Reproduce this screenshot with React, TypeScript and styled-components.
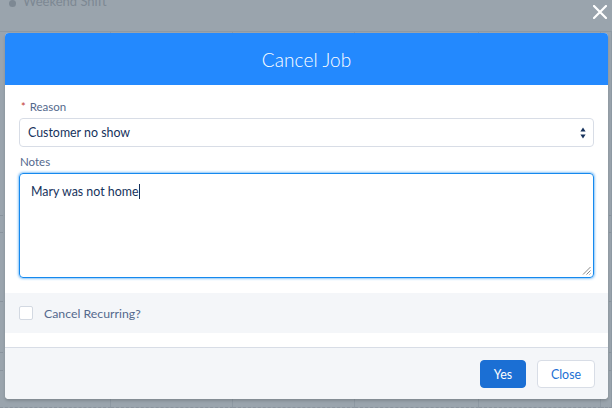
import styled, { createGlobalStyle } from 'styled-components';

const GlobalStyle = createGlobalStyle`
  html, body {
    margin: 0;
    padding: 0;
  }
  body {
    font-family: Lato, "Noto Sans", "Liberation Sans", sans-serif;
    background: #9aa4ad;
    -webkit-font-smoothing: antialiased;
  }
  * {
    box-sizing: border-box;
  }
`;

// background calendar, dimmed by the overlay
const colWidths = [111, 122, 122, 124, 122, 11];
const rowHeights = [184, 17, 69, 51, 18, 37];

const Page = styled.div`
  position: relative;
  width: 612px;
  height: 408px;
  overflow: hidden;
  background: #9aa4ad;
`;

const Calendar = styled.div`
  display: flex;
  flex-direction: column;
  height: 100%;
`;

const ShiftRow = styled.div`
  height: 32px;
  display: flex;
  align-items: flex-start;
  gap: 7px;
  padding-left: 9px;
  border-bottom: 1px solid #8e99a3;
  color: #7d8893;
  font-size: 13px;
`;

const ShiftDot = styled.span`
  width: 7px;
  height: 7px;
  border-radius: 50%;
  background: #7d8893;
`;

const ShiftLabel = styled.span`
  line-height: 13px;
  margin-top: -5px;
`;

const Grid = styled.div`
  flex: 1;
  display: grid;
  grid-template-columns: ${colWidths.map((w) => `${w}px`).join(' ')};
  grid-template-rows: ${rowHeights.map((h) => `${h}px`).join(' ')};
`;

const Cell = styled.div`
  border-right: 1px solid #8e99a3;
  border-bottom: 1px dashed #8a949e;
`;

const Overlay = styled.div`
  position: absolute;
  inset: 0;
  display: flex;
  align-items: flex-start;
  padding: 33px 4px 0 5px;
`;

const CloseIcon = styled.button`
  position: absolute;
  top: 5px;
  right: 5px;
  width: 14px;
  height: 14px;
  padding: 0;
  border: none;
  background: none;
  display: flex;
`;

const Modal = styled.div`
  flex: 1;
  display: flex;
  flex-direction: column;
  background: #fff;
  border-radius: 4px;
  overflow: hidden;
  box-shadow: 0 2px 3px rgba(0, 0, 0, 0.16);
`;

const Header = styled.div`
  height: 52px;
  display: flex;
  align-items: center;
  justify-content: center;
  background: #2389fe;
`;

const Title = styled.h2`
  margin: 0;
  color: #fff;
  font-size: 19px;
  font-weight: 300;
  letter-spacing: 0.1px;
`;

const Body = styled.div`
  display: flex;
  flex-direction: column;
  padding: 14px 14px 0;
`;

const Label = styled.label`
  display: flex;
  gap: 4px;
  height: 16px;
  line-height: 16px;
  margin-bottom: 3px;
  padding-left: 1px;
  font-size: 11.5px;
  color: #54698d;
`;

const Required = styled.abbr`
  color: #c23934;
  text-decoration: none;
  font-size: 11px;
  margin-left: 1px;
`;

const SelectBox = styled.div`
  height: 29px;
  display: flex;
  align-items: center;
  justify-content: space-between;
  padding: 0 7px 0 8px;
  border: 1px solid #d8dde6;
  border-radius: 4px;
  color: #16325c;
  font-size: 12.4px;
  margin-bottom: 7px;
`;

const NotesBox = styled.div`
  position: relative;
  height: 105px;
  padding: 9px 11px;
  border: 1px solid #1589ee;
  border-radius: 4px;
  box-shadow: 0 0 3px #1589ee;
  color: #16325c;
  font-size: 12.4px;
  line-height: 17px;
`;

const Caret = styled.span`
  display: inline-block;
  width: 1px;
  height: 15px;
  margin-left: 1px;
  vertical-align: -3px;
  background: #16325c;
`;

const Grip = styled.svg`
  position: absolute;
  right: 2px;
  bottom: 2px;
`;

const CheckSection = styled.div`
  margin-top: 15px;
  height: 40px;
  display: flex;
  align-items: center;
  gap: 11px;
  padding: 0 14px;
  background: #f4f6f9;
  color: #54698d;
  font-size: 12.3px;
`;

const Checkbox = styled.span`
  width: 14px;
  height: 14px;
  border: 1px solid #d3d9e2;
  border-radius: 2px;
  background: #fff;
`;

const Spacer = styled.div`
  height: 14px;
`;

const Footer = styled.div`
  display: flex;
  justify-content: flex-end;
  gap: 11px;
  padding: 12px 13px 11px;
  border-top: 1px solid #d8dde6;
  background: #f4f6f9;
`;

const Button = styled.button<{ $primary?: boolean }>`
  height: 28px;
  width: ${(p) => (p.$primary ? 46 : 58)}px;
  padding: 0;
  border-radius: 4px;
  border: 1px solid ${(p) => (p.$primary ? '#1b6fd4' : '#d8dde6')};
  background: ${(p) => (p.$primary ? '#1b6fd4' : '#fff')};
  color: ${(p) => (p.$primary ? '#fff' : '#1b6fd4')};
  font-family: inherit;
  font-size: 12.4px;
`;

export default function App() {
  return (
    <>
      <GlobalStyle />
      <Page>
        <Calendar>
          <ShiftRow>
            <ShiftDot />
            <ShiftLabel>Weekend Shift</ShiftLabel>
          </ShiftRow>
          <Grid>
            {rowHeights.map((_, r) =>
              colWidths.map((_, c) => <Cell key={`${r}-${c}`} />)
            )}
          </Grid>
        </Calendar>

        <Overlay>
          <CloseIcon aria-label="Close">
            <svg width="14" height="14" viewBox="0 0 14 14">
              <path d="M1 1 L13 13 M13 1 L1 13" stroke="#fff" strokeWidth="2.2" strokeLinecap="round" />
            </svg>
          </CloseIcon>

          <Modal>
            <Header>
              <Title>Cancel Job</Title>
            </Header>

            <Body>
              <Label>
                <Required title="required">*</Required>
                Reason
              </Label>
              <SelectBox>
                <span>Customer no show</span>
                <svg width="6" height="14" viewBox="0 0 6 14">
                  <path d="M3 1.5 L5.6 5.5 L0.4 5.5 Z M3 12.5 L5.6 8.5 L0.4 8.5 Z" fill="#16325c" />
                </svg>
              </SelectBox>

              <Label>Notes</Label>
              <NotesBox>
                Mary was not home
                <Caret />
                <Grip width="9" height="9" viewBox="0 0 9 9">
                  <path d="M8.5 1 L1 8.5 M8.5 4.5 L4.5 8.5 M8.5 7.5 L7.5 8.5" stroke="#7a7a7a" strokeWidth="0.9" />
                </Grip>
              </NotesBox>
            </Body>

            <CheckSection>
              <Checkbox />
              <span>Cancel Recurring?</span>
            </CheckSection>
            <Spacer />

            <Footer>
              <Button $primary>Yes</Button>
              <Button>Close</Button>
            </Footer>
          </Modal>
        </Overlay>
      </Page>
    </>
  );
}
